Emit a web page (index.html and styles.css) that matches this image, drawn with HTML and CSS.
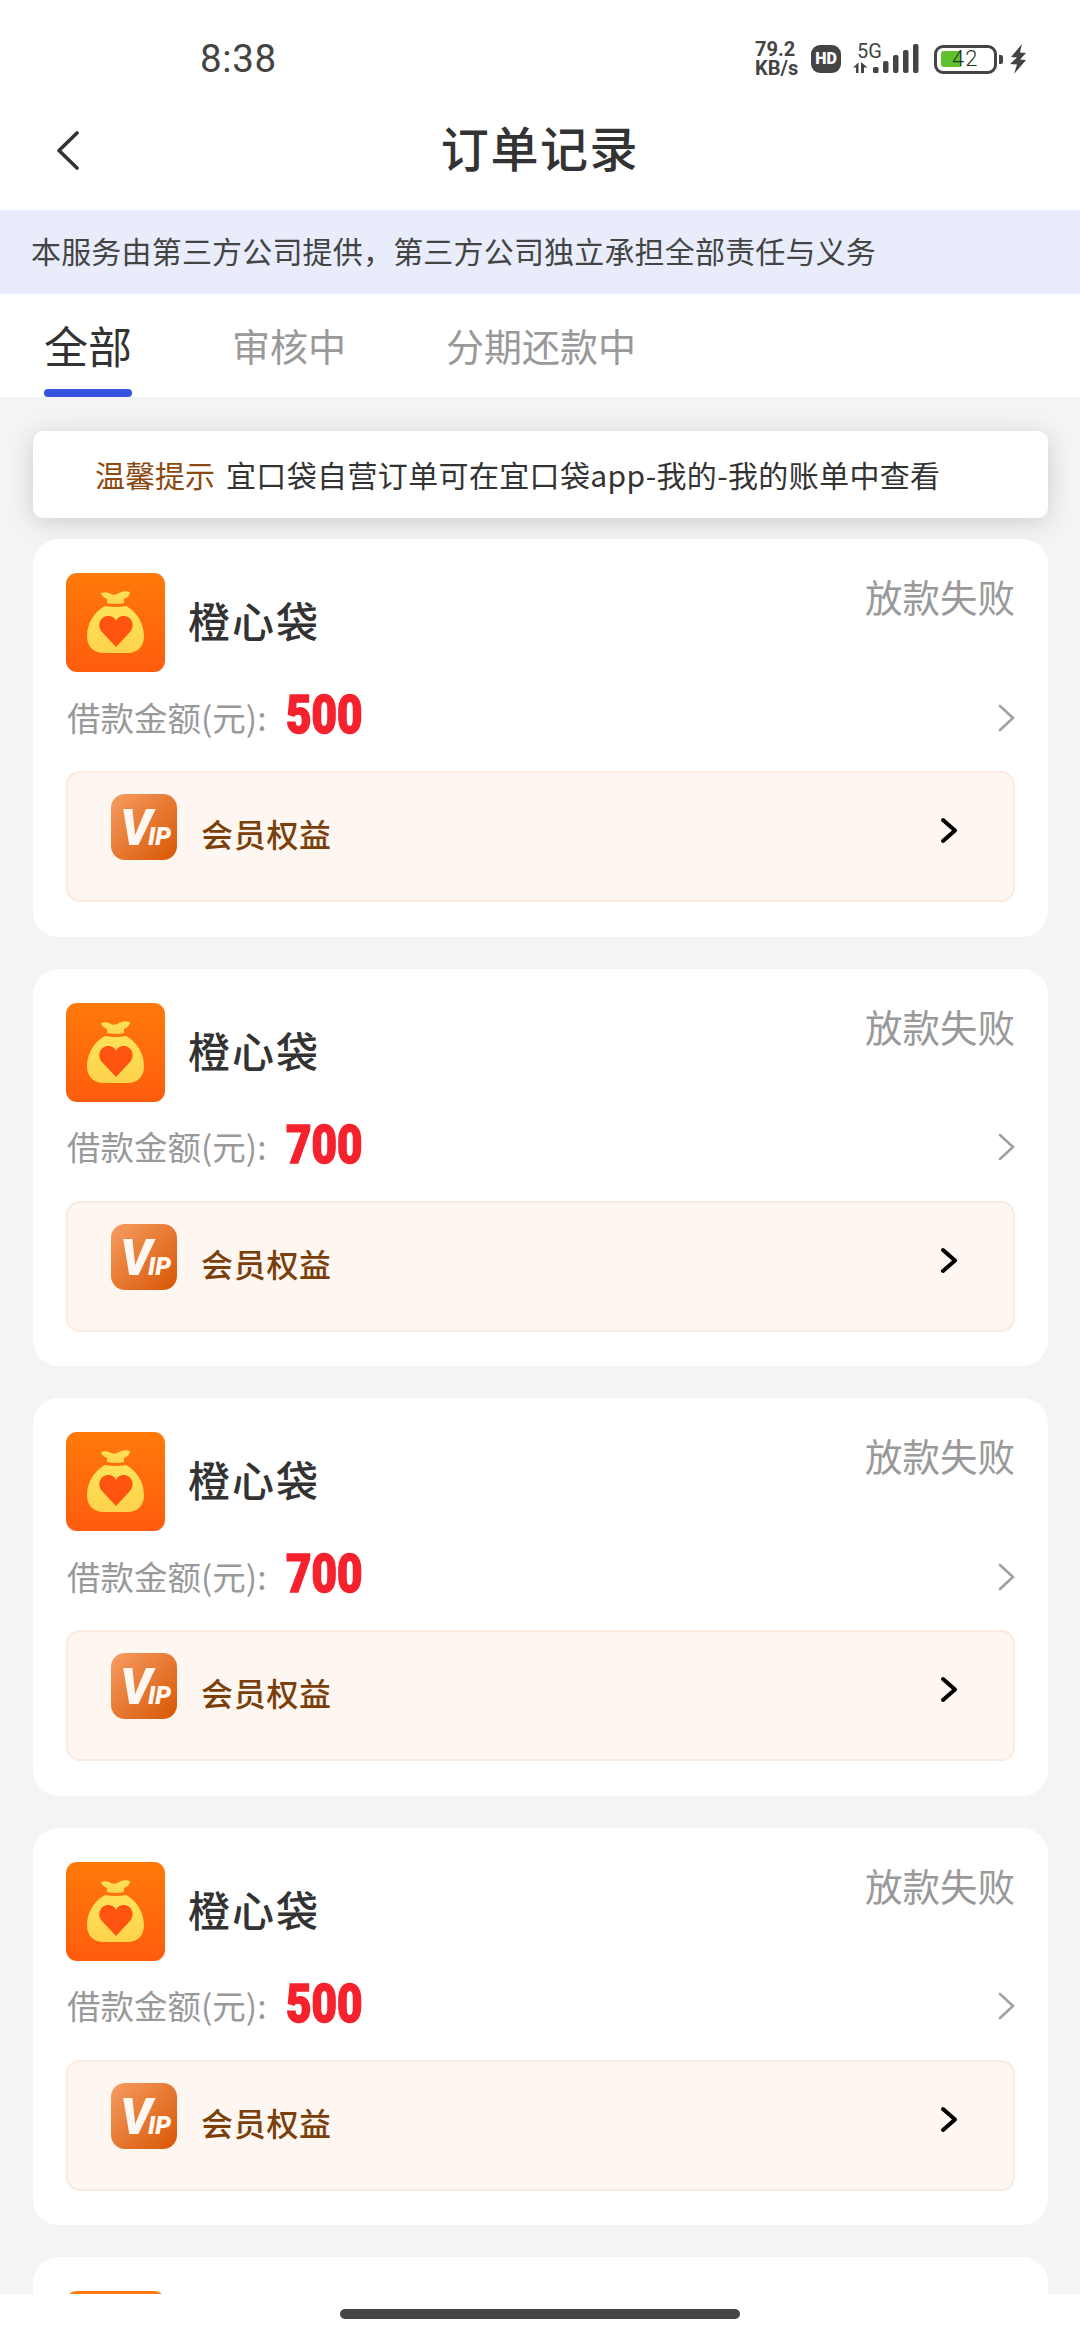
FILE: index.html
```html
<!DOCTYPE html>
<html lang="zh-CN">
<head>
<meta charset="utf-8">
<title>订单记录</title>
<link rel="stylesheet" href="styles.css">
</head>
<body>
<div class="page">
  <header class="top">
    <div class="statusbar">
      <span class="time">8:38</span>
      <div class="sysicons">
        <div class="speed">79.2 KB/s</div>
        <span class="hd">HD</span>
        <div class="net">
          <span class="fiveg">5G</span>
          <svg class="signal" width="66" height="30" viewBox="0 0 66 30">
            <path d="M0 23.500l5.500-5v10.500h-2.500v-5.500zM8 18v11h3v-5.500h3.500z" fill="#444"/>
            <rect x="20" y="23" width="5.500" height="6" rx="1.500" fill="#444"/>
            <rect x="30" y="17" width="5.500" height="12" rx="2" fill="#444"/>
            <rect x="40" y="11" width="5.500" height="18" rx="2" fill="#444"/>
            <rect x="50" y="6" width="5.500" height="23" rx="2" fill="#444"/>
            <rect x="60" y="0" width="5.500" height="29" rx="2" fill="#444"/>
          </svg>
        </div>
        <div class="battery"><span class="battery-fill"></span><span class="battery-num">42</span></div>
        <span class="battery-nub"></span>
        <svg class="bolt" width="17" height="30" viewBox="0 0 17 30">
          <path d="M12 0L1 13l6 .5L0 20l7 .5L4 30l12-14-6-.5 6-6.500-6-.5z" fill="#444"/>
        </svg>
      </div>
    </div>
    <nav class="navbar">
      <svg class="back" width="24" height="40" viewBox="0 0 24 40">
        <path d="M21 2L3 19.500 21 37" fill="none" stroke="#333" stroke-width="3.600" stroke-linecap="round" stroke-linejoin="round"/>
      </svg>
      <h1 class="title">订单记录</h1>
    </nav>
  </header>

  <div class="banner">本服务由第三方公司提供，第三方公司独立承担全部责任与义务</div>

  <div class="tabs">
    <div class="tab tab-active">全部</div>
    <div class="tab">审核中</div>
    <div class="tab">分期还款中</div>
  </div>

  <main class="content">
    <div class="notice"><span class="notice-tag">温馨提示</span><span class="notice-text">宜口袋自营订单可在宜口袋app-我的-我的账单中查看</span></div>

    <article class="card">
      <div class="card-head">
        <svg class="logo" width="99" height="99" viewBox="0 0 99 99"><use href="#bag"/></svg>
        <span class="name">橙心袋</span>
        <span class="state">放款失败</span>
      </div>
      <div class="amount-row">
        <span class="amount-label">借款金额(元):</span>
        <span class="amount">500</span>
        <svg class="more" width="17" height="28" viewBox="0 0 17 28"><path d="M2 2l13 12L2 26" fill="none" stroke="#a0a0a0" stroke-width="2.600" stroke-linecap="round"/></svg>
      </div>
      <div class="vip">
        <svg class="vip-icon" width="66" height="66" viewBox="0 0 66 66"><use href="#vipmark"/></svg>
        <span class="vip-text">会员权益</span>
        <svg class="vip-go" width="18" height="27" viewBox="0 0 18 27"><path d="M3 3l12 10.500L3 24" fill="none" stroke="#000" stroke-width="4" stroke-linecap="round" stroke-linejoin="round"/></svg>
      </div>
    </article>

    <article class="card">
      <div class="card-head">
        <svg class="logo" width="99" height="99" viewBox="0 0 99 99"><use href="#bag"/></svg>
        <span class="name">橙心袋</span>
        <span class="state">放款失败</span>
      </div>
      <div class="amount-row">
        <span class="amount-label">借款金额(元):</span>
        <span class="amount">700</span>
        <svg class="more" width="17" height="28" viewBox="0 0 17 28"><path d="M2 2l13 12L2 26" fill="none" stroke="#a0a0a0" stroke-width="2.600" stroke-linecap="round"/></svg>
      </div>
      <div class="vip">
        <svg class="vip-icon" width="66" height="66" viewBox="0 0 66 66"><use href="#vipmark"/></svg>
        <span class="vip-text">会员权益</span>
        <svg class="vip-go" width="18" height="27" viewBox="0 0 18 27"><path d="M3 3l12 10.500L3 24" fill="none" stroke="#000" stroke-width="4" stroke-linecap="round" stroke-linejoin="round"/></svg>
      </div>
    </article>

    <article class="card">
      <div class="card-head">
        <svg class="logo" width="99" height="99" viewBox="0 0 99 99"><use href="#bag"/></svg>
        <span class="name">橙心袋</span>
        <span class="state">放款失败</span>
      </div>
      <div class="amount-row">
        <span class="amount-label">借款金额(元):</span>
        <span class="amount">700</span>
        <svg class="more" width="17" height="28" viewBox="0 0 17 28"><path d="M2 2l13 12L2 26" fill="none" stroke="#a0a0a0" stroke-width="2.600" stroke-linecap="round"/></svg>
      </div>
      <div class="vip">
        <svg class="vip-icon" width="66" height="66" viewBox="0 0 66 66"><use href="#vipmark"/></svg>
        <span class="vip-text">会员权益</span>
        <svg class="vip-go" width="18" height="27" viewBox="0 0 18 27"><path d="M3 3l12 10.500L3 24" fill="none" stroke="#000" stroke-width="4" stroke-linecap="round" stroke-linejoin="round"/></svg>
      </div>
    </article>

    <article class="card">
      <div class="card-head">
        <svg class="logo" width="99" height="99" viewBox="0 0 99 99"><use href="#bag"/></svg>
        <span class="name">橙心袋</span>
        <span class="state">放款失败</span>
      </div>
      <div class="amount-row">
        <span class="amount-label">借款金额(元):</span>
        <span class="amount">500</span>
        <svg class="more" width="17" height="28" viewBox="0 0 17 28"><path d="M2 2l13 12L2 26" fill="none" stroke="#a0a0a0" stroke-width="2.600" stroke-linecap="round"/></svg>
      </div>
      <div class="vip">
        <svg class="vip-icon" width="66" height="66" viewBox="0 0 66 66"><use href="#vipmark"/></svg>
        <span class="vip-text">会员权益</span>
        <svg class="vip-go" width="18" height="27" viewBox="0 0 18 27"><path d="M3 3l12 10.500L3 24" fill="none" stroke="#000" stroke-width="4" stroke-linecap="round" stroke-linejoin="round"/></svg>
      </div>
    </article>

    <article class="card">
      <div class="card-head">
        <svg class="logo" width="99" height="99" viewBox="0 0 99 99"><use href="#bag"/></svg>
      </div>
    </article>
  </main>

  <div class="homebar"><span class="homepill"></span></div>

  <svg class="defs" width="0" height="0" aria-hidden="true">
    <defs>
      <linearGradient id="bagbg" x1="0" y1="0" x2="0" y2="1"><stop offset="0" stop-color="#ff7a0a"/><stop offset="1" stop-color="#ff5c0e"/></linearGradient>
      <linearGradient id="bagfill" x1="0" y1="0" x2="0" y2="1"><stop offset="0" stop-color="#ffe25a"/><stop offset="1" stop-color="#fdd34a"/></linearGradient>
      <linearGradient id="vipbg" x1="0" y1="0" x2="1" y2="1"><stop offset="0" stop-color="#f69d62"/><stop offset="1" stop-color="#d85604"/></linearGradient>
      <symbol id="bag" viewBox="0 0 99 99">
        <rect width="99" height="99" rx="11" fill="url(#bagbg)"/>
        <path d="M35 20Q41 18 45 21Q49 23 53 20Q58 17 64 19Q64 24 58 26L58 30Q50 32 41 30L41 26Q36 24 35 20Z" fill="url(#bagfill)"/>
        <path d="M39 33Q50 35 60 33C70 38 78 50 78 63C78 75 70 80 62 80L37 80C29 80 21 75 21 63C21 50 29 38 39 33Z" fill="url(#bagfill)"/>
        <path d="M50 74L36 59C30 52 35 43 42 43C46 43 49 45 50 48C51 45 54 43 58 43C65 43 70 52 64 59Z" fill="#ff5310"/>
      </symbol>
      <symbol id="vipmark" viewBox="0 0 66 66">
        <rect width="66" height="66" rx="14" fill="url(#vipbg)"/>
        <text class="vip-v" x="9" y="51">V</text>
        <text class="vip-ip" x="37" y="51">IP</text>
      </symbol>
    </defs>
  </svg>
</div>
</body>
</html>
```

FILE: styles.css
```css
* { box-sizing: border-box; }
html, body { margin: 0; padding: 0; }
body { font-family: "Noto Sans CJK SC", "Noto Sans", sans-serif; background: #f4f4f4; }
.page { width: 1080px; height: 2340px; overflow: hidden; position: relative; background: #f4f4f4; }

.top { background: #fff; height: 210px; }
.statusbar { height: 90px; padding: 28px 53px 0 200px; display: flex; align-items: center; justify-content: space-between; }
.time { font-family: Roboto, sans-serif; font-size: 38.500px; line-height: 62px; color: #444; letter-spacing: 0.6px; }
.sysicons { display: flex; align-items: center; height: 62px; }
.speed { width: 48px; font-family: Roboto, sans-serif; font-weight: 700; font-size: 20px; line-height: 19px; color: #444; }
.hd { margin-left: 8px; width: 30px; height: 28px; border-radius: 9px; background: #444; color: #fff; font-family: Roboto, sans-serif; font-weight: 900; font-size: 16px; line-height: 28px; text-align: center; }
.net { position: relative; margin-left: 12px; width: 66px; height: 30px; }
.fiveg { position: absolute; left: 4px; top: -3px; font-family: Roboto, sans-serif; font-size: 20px; line-height: 20px; color: #444; }
.signal { display: block; }
.battery { position: relative; margin-left: 15px; width: 63px; height: 29px; border: 3.500px solid #444; border-radius: 9px; }
.battery-fill { position: absolute; left: 4px; top: 3px; width: 20px; height: 16px; background: #5fc22d; border-radius: 3px 0 0 3px; }
.battery-num { position: absolute; left: 15px; top: 0; font-family: Roboto, sans-serif; font-weight: 300; font-size: 22px; line-height: 22px; color: #2a3a22; letter-spacing: 1px; }
.battery-nub { margin-left: 2px; width: 4px; height: 9px; border-radius: 0 2px 2px 0; background: #444; }
.bolt { margin-left: 7px; display: block; }

.navbar { height: 120px; padding-bottom: 9px; display: flex; align-items: center; justify-content: center; position: relative; }
.back { position: absolute; left: 56px; top: 41px; }
.title { margin: 0; font-size: 48px; line-height: 60px; font-weight: 500; color: #333; letter-spacing: 1.600px; }

.banner { height: 84px; background: #e9edfb; padding-left: 31px; font-size: 30px; line-height: 81px; color: #444; letter-spacing: 0.180px; }

.tabs { height: 103px; background: #fff; display: flex; align-items: flex-start; gap: 100px; padding-left: 44px; }
.tab { height: 103px; padding-top: 23px; font-size: 38px; line-height: 56px; color: #999; white-space: nowrap; }
.tab-active { position: relative; font-size: 44px; color: #333; }
.tab-active::after { content: ""; position: absolute; left: 0; right: 0; bottom: 0; height: 8px; border-radius: 4px; background: #3553e0; }

.content { padding: 34px 32px 0 33px; display: flex; flex-direction: column; gap: 32px; }
.notice { height: 87px; margin-bottom: -11px; padding-left: 62px; background: #fff; border-radius: 10px; box-shadow: 0 4px 26px rgba(0,0,0,.16); font-size: 30px; line-height: 87px; white-space: nowrap; }
.notice-tag { color: #8a4a10; margin-right: 11px; }
.notice-text { color: #333; letter-spacing: 0.360px; }

.card { flex: none; height: 397.500px; padding: 34px 33px 0; background: #fff; border-radius: 26px; }
.card-head { display: flex; align-items: flex-start; }
.logo { display: block; flex: none; }
.name { margin-left: 23px; font-size: 42px; line-height: 94px; font-weight: 500; color: #333; letter-spacing: 2px; }
.state { margin-left: auto; margin-top: -2px; font-size: 37.500px; line-height: 50px; color: #999; }

.amount-row { margin-top: 13px; height: 63px; display: flex; align-items: center; padding-left: 1px; }
.amount-label { font-size: 33.500px; color: #999; line-height: 62px; }
.amount { width: 76px; margin-left: 20px; margin-top: -3px; font-family: Roboto, sans-serif; font-weight: 900; font-size: 53px; line-height: 62px; color: #f5222d; -webkit-text-stroke: 1.500px #f5222d; transform: scaleX(0.83); transform-origin: left center; white-space: nowrap; }
.more { margin-left: auto; margin-top: 2px; display: block; }

.vip { margin-top: 23px; height: 131px; padding: 21px 0 0 43px; display: flex; align-items: flex-start; background: #fef6f0; border: 2px solid #f9ebe1; border-radius: 14px; }
.vip-icon { display: block; flex: none; }
.vip-text { margin-left: 24px; font-size: 32px; line-height: 78px; font-weight: 500; color: #7a3f0a; letter-spacing: 0.700px; }
.vip-go { margin-left: auto; margin-right: 55px; margin-top: 23px; display: block; }
.vip-v { font-family: Roboto, sans-serif; font-weight: 900; font-style: italic; font-size: 50px; fill: #fff8f2; }
.vip-ip { font-family: Roboto, sans-serif; font-weight: 900; font-style: italic; font-size: 25px; fill: #fff8f2; }

.homebar { position: absolute; left: 0; right: 0; bottom: 0; height: 46px; background: #fff; display: flex; justify-content: center; padding-top: 15px; }
.homepill { width: 400px; height: 10px; border-radius: 5px; background: #444; }
.defs { position: absolute; }
```
